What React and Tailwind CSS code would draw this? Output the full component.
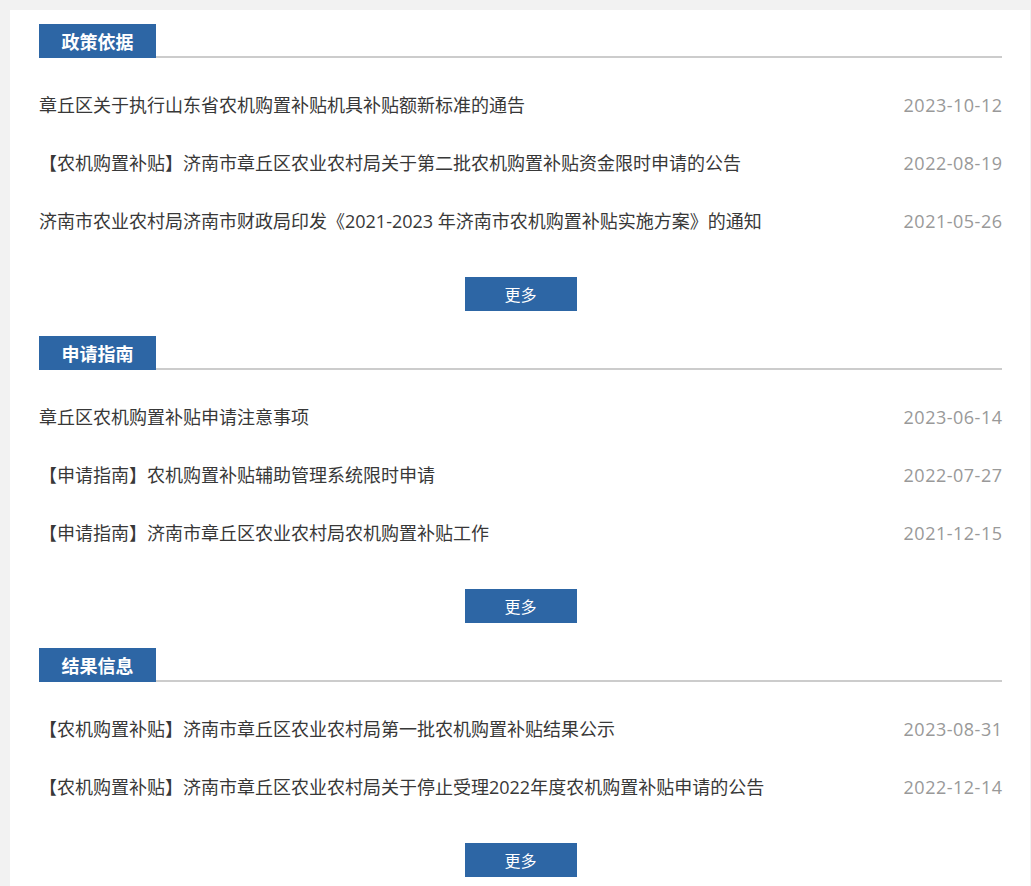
import React from 'react';

const sections = [
  {
    title: '政策依据',
    items: [
      { title: '章丘区关于执行山东省农机购置补贴机具补贴额新标准的通告', date: '2023-10-12' },
      { title: '【农机购置补贴】济南市章丘区农业农村局关于第二批农机购置补贴资金限时申请的公告', date: '2022-08-19' },
      { title: '济南市农业农村局济南市财政局印发《2021-2023 年济南市农机购置补贴实施方案》的通知', date: '2021-05-26' },
    ],
  },
  {
    title: '申请指南',
    items: [
      { title: '章丘区农机购置补贴申请注意事项', date: '2023-06-14' },
      { title: '【申请指南】农机购置补贴辅助管理系统限时申请', date: '2022-07-27' },
      { title: '【申请指南】济南市章丘区农业农村局农机购置补贴工作', date: '2021-12-15' },
    ],
  },
  {
    title: '结果信息',
    items: [
      { title: '【农机购置补贴】济南市章丘区农业农村局第一批农机购置补贴结果公示', date: '2023-08-31' },
      { title: '【农机购置补贴】济南市章丘区农业农村局关于停止受理2022年度农机购置补贴申请的公告', date: '2022-12-14' },
    ],
  },
];

const listFont = { fontFamily: '"Open Sans", "Noto Sans CJK SC", sans-serif' };

const Section = ({ section }) => (
  <div className="pb-[25px]">
    {/* Header */}
    <div className="flex items-end border-b-2 border-[#cccccc]">
      <div className="h-[34px] w-[117px] bg-[#2d66a5] text-white text-[18px] font-bold flex items-center justify-center -mb-[2px]">
        {section.title}
      </div>
    </div>

    {/* List */}
    <ul className="mt-[18px]" style={listFont}>
      {section.items.map((item) => (
        <li key={item.title} className="h-[58px] flex items-center justify-between text-[18px]">
          <a href="#" className="text-[#383838] truncate">{item.title}</a>
          <span className="text-[#999999] shrink-0 ml-4 tracking-[0.5px] -mr-[0.5px]">{item.date}</span>
        </li>
      ))}
    </ul>

    <div className="flex justify-center mt-[27px]">
      <button className="h-[34px] w-[112px] bg-[#2d66a5] text-white text-[16px]">更多</button>
    </div>
  </div>
);

const App = () => {
  return (
    <div
      className="min-h-screen bg-[#f2f2f2] pt-[10px] pl-[10px] pr-[1px]"
      style={{ fontFamily: '"Noto Sans CJK SC", "Noto Sans", sans-serif' }}
    >
      <div className="bg-white pt-[14px] pl-[29px] pr-[28px]">
        {sections.map((s) => (
          <Section key={s.title} section={s} />
        ))}
      </div>
    </div>
  );
};

export default App;
